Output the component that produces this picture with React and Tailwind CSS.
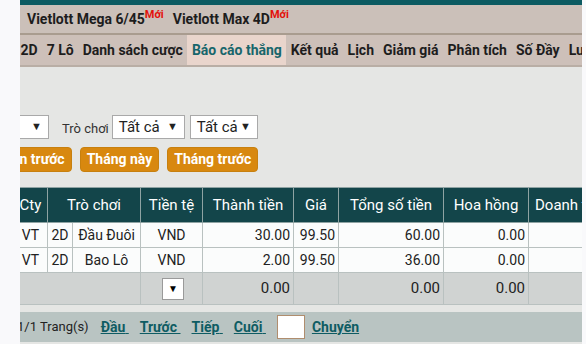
import { useState } from 'react';

const menu = ['2D', '7 Lô', 'Danh sách cược', 'Báo cáo thắng', 'Kết quả', 'Lịch', 'Giảm giá', 'Phân tích', 'Số Đầy', 'Lưu trữ'];

const rows = [
  { cty: 'VT', type: '2D', game: 'Đầu Đuôi', cur: 'VND', amount: '30.00', rate: '99.50', total: '60.00', comm: '0.00' },
  { cty: 'VT', type: '2D', game: 'Bao Lô', cur: 'VND', amount: '2.00', rate: '99.50', total: '36.00', comm: '0.00' },
];

function Select({ label, className }) {
  return (
    <div className={`flex h-[24px] items-center justify-between border border-[#a9a9a9] bg-white pl-[6px] pr-[6px] text-[15px] text-[#222] ${className}`}>
      <span>{label}</span>
      <span className="text-[11px]">▼</span>
    </div>
  );
}

export default function App() {
  const [active] = useState('Báo cáo thắng');
  const [page, setPage] = useState('');

  const th = 'border border-[#8fa3a3] font-normal text-[15px] text-white h-[35px]';
  const td = 'border border-[#b9c1c0] h-[25px] text-[14px] text-[#222]';
  const foot = 'border border-[#b9c1c0] pr-[3px] text-right text-[15px] text-[#222]';

  return (
    <div className="flex h-[344px] w-[586px] overflow-hidden bg-[#f9f9fb] font-['Roboto',sans-serif]">
      <div className="w-[20px] shrink-0" />
      <div className="w-[562px] shrink-0 overflow-hidden bg-[#e5e6e4]">
        <div className="h-[5px] bg-[#0c5b62]" />
        <div className="flex h-[30px] items-center gap-[9px] border-b-2 border-[#a99c8f] bg-[#cbc0b9] pl-[7px] text-[14px] font-bold text-[#1d1d1d]">
          <span>
            Vietlott Mega 6/45<sup className="text-[11px] text-[#e3120b]">Mới</sup>
          </span>
          <span>
            Vietlott Max 4D<sup className="text-[11px] text-[#e3120b]">Mới</sup>
          </span>
        </div>
        <div className="flex h-[32px] items-stretch whitespace-nowrap border-b-2 border-[#b9aea5] bg-[#cdc0b9] text-[14px] font-bold text-[#1d1d1d]">
          <div className="-ml-[4px] flex">
            {menu.map((m) => (
              <span
                key={m}
                className={`flex items-center px-[4.5px] ${m === active ? 'bg-[#e9d5cc] text-[#17666b]' : ''}`}
              >
                {m}
              </span>
            ))}
          </div>
        </div>

        <div className="flex items-center pt-[48px] text-[13px] text-[#333]">
          <Select label="" className="w-[29px] border-l-0 pl-0" />
          <span className="ml-[13px] mr-[3px] mt-[3px]">Trò chơi</span>
          <Select label="Tất cả" className="w-[73px]" />
          <Select label="Tất cả" className="ml-[5px] w-[68px]" />
        </div>

        <div className="mt-[8px] flex gap-[8px] overflow-hidden">
          {['Tuần trước', 'Tháng này', 'Tháng trước'].map((b, i) => (
            <button
              key={b}
              className={`h-[25px] shrink-0 rounded-[4px] border border-[#c7800f] bg-[#d8880f] px-[6px] text-[14px] font-bold text-white ${i === 0 ? '-ml-[31px]' : ''}`}
            >
              {b}
            </button>
          ))}
        </div>

        <div className="mt-[15px] overflow-hidden">
          <table className="-ml-[7px] w-[595px] table-fixed border-collapse">
            <colgroup>
              <col className="w-[34px]" />
              <col className="w-[25px]" />
              <col className="w-[68px]" />
              <col className="w-[62px]" />
              <col className="w-[91px]" />
              <col className="w-[45px]" />
              <col className="w-[105px]" />
              <col className="w-[85px]" />
              <col className="w-[80px]" />
            </colgroup>
            <thead>
              <tr className="bg-[#13454a]">
                <th className={th}>Cty</th>
                <th className={th} colSpan={2}>Trò chơi</th>
                <th className={th}>Tiền tệ</th>
                <th className={th}>Thành tiền</th>
                <th className={th}>Giá</th>
                <th className={th}>Tổng số tiền</th>
                <th className={th}>Hoa hồng</th>
                <th className={`${th} whitespace-nowrap pl-[6px] text-left`}>Doanh thu</th>
              </tr>
            </thead>
            <tbody>
              {rows.map((r, i) => (
                <tr key={i} className="bg-[#fbfcfc]">
                  <td className={`${td} text-center`}>{r.cty}</td>
                  <td className={`${td} text-center`}>{r.type}</td>
                  <td className={`${td} text-center`}>{r.game}</td>
                  <td className={`${td} text-center`}>{r.cur}</td>
                  <td className={`${td} pr-[3px] text-right`}>{r.amount}</td>
                  <td className={`${td} pr-[3px] text-right`}>{r.rate}</td>
                  <td className={`${td} pr-[3px] text-right`}>{r.total}</td>
                  <td className={`${td} pr-[3px] text-right`}>{r.comm}</td>
                  <td className={td} />
                </tr>
              ))}
              <tr className="bg-[#d0d3d2]">
                <td className="h-[32px] border-y border-[#b9c1c0]" colSpan={3} />
                <td className="border border-[#b9c1c0]">
                  <div className="ml-[21px] flex h-[22px] w-[22px] items-center justify-center border border-[#9a9a9a] bg-white text-[10px]">▼</div>
                </td>
                <td className={foot}>0.00</td>
                <td className="border border-[#b9c1c0]" />
                <td className={foot}>0.00</td>
                <td className={foot}>0.00</td>
                <td className="border border-[#b9c1c0]" />
              </tr>
            </tbody>
          </table>
        </div>

        <div className="mt-[7px] flex h-[30px] items-center whitespace-nowrap bg-[#b9c4c2] text-[14px]">
          <span className="-ml-[3px] mr-[12px] text-[13px] text-[#222]">1/1 Trang(s)</span>
          {['Đầu', 'Trước', 'Tiếp', 'Cuối'].map((l) => (
            <a key={l} href="#" className="mr-[11px] font-bold text-[#0e5c63] underline">
              {l}&nbsp;
            </a>
          ))}
          <input
            value={page}
            onChange={(e) => setPage(e.target.value)}
            className="mr-[7px] h-[24px] w-[28px] border border-[#b08d6e] bg-white outline-none"
          />
          <a href="#" className="font-bold text-[#0e5c63] underline">Chuyển</a>
        </div>
      </div>
      <div className="w-[4px] shrink-0" />
    </div>
  );
}
